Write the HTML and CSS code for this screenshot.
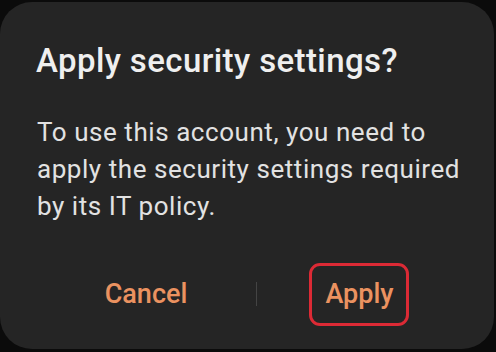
FILE: index.html
```html
<!DOCTYPE html>
<html>
<head>
<meta charset="utf-8">
<link rel="stylesheet" href="styles.css">
</head>
<body>
<div class="dialog">
  <h1 class="title">Apply security settings?</h1>
  <p class="message">To use this account, you need to apply the security settings required by its IT policy.</p>
  <div class="actions">
    <div class="action-cell"><span class="btn">Cancel</span></div>
    <div class="divider"></div>
    <div class="action-cell"><span class="btn btn-highlight">Apply</span></div>
  </div>
</div>
</body>
</html>
```

FILE: styles.css
```css
html, body {
  margin: 0;
  padding: 0;
  background: #0b0b0b;
  width: 496px;
  height: 352px;
  overflow: hidden;
  font-family: Roboto, "Noto Sans", sans-serif;
}
.dialog {
  box-sizing: border-box;
  margin: 2px 2px 0 0;
  width: 494px;
  height: 347px;
  background: #252525;
  border-radius: 32px;
  padding-top: 41px;
  display: flex;
  flex-direction: column;
}
.title {
  margin: 0;
  padding-left: 36px;
  font-size: 33px;
  line-height: 36px;
  letter-spacing: 0.4px;
  font-weight: 500;
  color: #efefef;
}
.message {
  margin: 35px 0 0 0;
  padding: 0 27px 0 37px;
  font-size: 26px;
  line-height: 37px;
  letter-spacing: 0.55px;
  font-weight: 400;
  color: #e2e2e2;
}
.actions {
  margin-top: 36px;
  padding: 0 33px 0 36px;
  display: grid;
  grid-template-columns: 220px 1px 1fr;
  align-items: center;
}
.action-cell {
  display: flex;
  justify-content: center;
  align-items: center;
}
.divider {
  width: 1px;
  height: 24px;
  background: #444;
}
.btn {
  font-size: 27px;
  line-height: 32px;
  font-weight: 500;
  color: #eb9260;
  padding: 14px 16px;
  border: 3px solid transparent;
}
.btn-highlight {
  border-color: #dc2a35;
  border-radius: 11px;
  padding: 12px 12px 13px 13px;
}
```
